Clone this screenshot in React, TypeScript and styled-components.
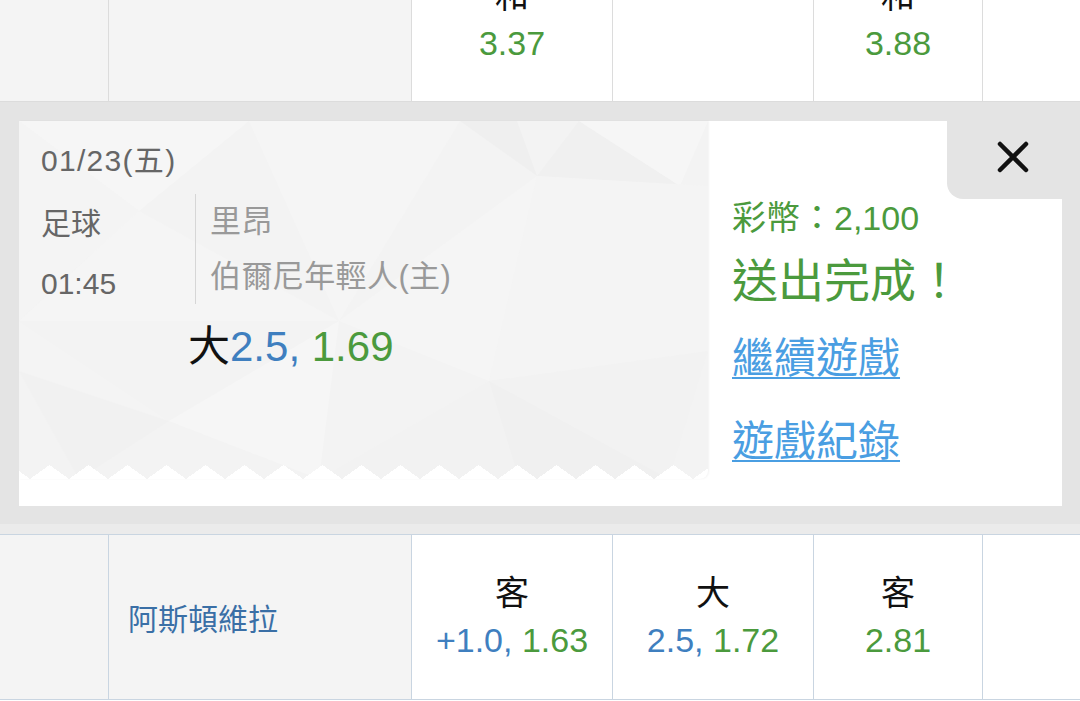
import React from 'react';
import styled, { createGlobalStyle } from 'styled-components';

const GlobalStyle = createGlobalStyle`
  body {
    margin: 0;
    background: #fff;
    font-family: "Liberation Sans", "Noto Sans CJK TC", sans-serif;
  }
`;

const colors = {
    green: '#4b9a3d',
    blue: '#3f7fbf',
    link: '#4a9ee2',
    team: '#3a6fa6',
    panel: '#e4e4e4',
    shade: '#f4f4f4',
};

const Page = styled.div`
    width: 1080px;
    height: 701px;
    overflow: hidden;
    background: #fff;
`;

const Row = styled.div<{ $tone: 'grey' | 'blue'; $top?: boolean }>`
    display: grid;
    grid-template-columns: 108px 303px 201px 201px 169px 1fr;
    height: ${p => (p.$top ? '164px' : '166px')};
    box-sizing: border-box;
    margin-top: ${p => (p.$top ? '-62px' : '0')};
    border-top: ${p => (p.$top ? 'none' : '1px solid #c9d5e1')};
    border-bottom: 1px solid ${p => (p.$tone === 'grey' ? '#dcdcdc' : '#c9d5e1')};
    --line: ${p => (p.$tone === 'grey' ? '#dcdcdc' : '#c9d5e1')};
`;

const Cell = styled.div<{ $shade?: boolean; $left?: boolean }>`
    display: flex;
    flex-direction: column;
    justify-content: center;
    align-items: ${p => (p.$left ? 'flex-start' : 'center')};
    padding-left: ${p => (p.$left ? '19px' : '0')};
    background: ${p => (p.$shade ? colors.shade : '#fff')};
    & + & {
        border-left: 1px solid var(--line);
    }
`;

const Pick = styled.div`
    font-size: 34px;
    line-height: 47px;
    color: #111;
`;

const Odds = styled.div`
    font-size: 34px;
    line-height: 47px;
    white-space: nowrap;
`;

const Line = styled.span`
    color: ${colors.blue};
`;

const Price = styled.span`
    color: ${colors.green};
`;

const TeamName = styled.div`
    font-size: 30px;
    color: ${colors.team};
`;

const Panel = styled.section`
    background: ${colors.panel};
    padding: 19px 18px 18px 19px;
    border-bottom: 10px solid #ebebeb;
`;

const Card = styled.div`
    display: flex;
    height: 385px;
    background: #fff;
`;

const Ticket = styled.div`
    position: relative;
    width: 689px;
    height: 358px;
    box-sizing: border-box;
    padding: 20px 0 0 22px;
    background: #f3f3f3;
    border-bottom-right-radius: 8px;
    box-shadow: 1px 0 2px rgba(0, 0, 0, 0.05);
    overflow: hidden;

    &::after {
        content: '';
        position: absolute;
        left: 0;
        right: 0;
        bottom: 0;
        height: 14px;
        background-image: conic-gradient(from 125.7deg at 50% 0, #fff 108.6deg, transparent 0);
        background-size: 39px 14px;
        background-position: 11px 0;
        background-repeat: repeat-x;
    }
`;

const TicketArt = styled.svg`
    position: absolute;
    inset: 0;
`;

const TicketBody = styled.div`
    position: relative;
`;

const DateLine = styled.div`
    font-size: 30px;
    line-height: 40px;
    letter-spacing: 1.3px;
    color: #666;
`;

const MatchRow = styled.div`
    display: flex;
    margin-top: 13px;
`;

const MetaCol = styled.div`
    width: 154px;
    font-size: 30px;
    line-height: 60px;
    color: #666;
`;

const Teams = styled.div`
    height: 110px;
    padding-left: 14px;
    border-left: 1px solid #d6d6d6;
    font-size: 31px;
    line-height: 55px;
    letter-spacing: 0.4px;
    color: #999;
`;

const Bet = styled.div`
    margin: 8px 0 0 147px;
    font-size: 42px;
    line-height: 50px;
    color: #111;
`;

const Info = styled.div`
    position: relative;
    flex: 1;
    padding: 75px 0 0 24px;
`;

const CloseTab = styled.button`
    position: absolute;
    top: 0;
    right: 0;
    width: 115px;
    height: 78px;
    box-sizing: border-box;
    border: none;
    padding: 20px 33px 0 0;
    background: ${colors.panel};
    border-bottom-left-radius: 16px;
    display: flex;
    align-items: flex-start;
    justify-content: flex-end;
    cursor: pointer;
`;

const Coins = styled.div`
    font-size: 34px;
    line-height: 44px;
    color: ${colors.green};
`;

const Done = styled.div`
    margin-top: 11px;
    font-size: 46px;
    line-height: 60px;
    color: ${colors.green};
`;

const ActionLink = styled.a<{ $gap: number }>`
    display: block;
    width: max-content;
    margin-top: ${p => p.$gap}px;
    font-size: 42px;
    line-height: 56px;
    color: ${colors.link};
    text-decoration: underline;
    text-decoration-thickness: 2px;
    text-underline-offset: 4px;
`;

const shards: [string, string][] = [
    ['0,0 230,0 120,90', '#f6f6f6'],
    ['0,0 120,90 0,200', '#f4f4f4'],
    ['230,0 441,0 320,200', '#f5f5f5'],
    ['441,0 518,55 498,0', '#efefef'],
    ['518,55 560,0 661,65', '#f0f0f0'],
    ['560,0 689,0 661,65', '#f6f6f6'],
    ['120,90 320,200 0,200', '#f5f5f5'],
    ['0,250 150,300 60,358', '#f1f1f1'],
    ['0,200 150,300 0,250', '#f4f4f4'],
    ['150,300 320,200 300,358', '#f6f6f6'],
    ['320,200 518,55 470,260', '#f5f5f5'],
    ['518,55 689,65 689,230 470,260', '#f4f4f4'],
    ['470,260 689,230 650,358', '#f2f2f2'],
    ['300,358 470,260 500,358', '#f2f2f2'],
    ['500,358 470,260 650,358', '#f0f0f0'],
];

const CloseIcon = () => (
    <svg width="32" height="32" viewBox="0 0 32 32">
        <path d="M3 3 L29 29 M29 3 L3 29" stroke="#111" strokeWidth="4.5" strokeLinecap="round" />
    </svg>
);

export default function App() {
    return (
        <>
            <GlobalStyle />
            <Page>
                <Row $tone="grey" $top>
                    <Cell $shade />
                    <Cell $shade />
                    <Cell>
                        <Pick>和</Pick>
                        <Odds><Price>3.37</Price></Odds>
                    </Cell>
                    <Cell />
                    <Cell>
                        <Pick>和</Pick>
                        <Odds><Price>3.88</Price></Odds>
                    </Cell>
                    <Cell />
                </Row>

                <Panel>
                    <Card>
                        <Ticket>
                            <TicketArt width="689" height="358" viewBox="0 0 689 358">
                                {shards.map(([pts, fill], i) => (
                                    <polygon key={i} points={pts} fill={fill} />
                                ))}
                            </TicketArt>
                            <TicketBody>
                                <DateLine>01/23(五)</DateLine>
                                <MatchRow>
                                    <MetaCol>
                                        <div>足球</div>
                                        <div>01:45</div>
                                    </MetaCol>
                                    <Teams>
                                        <div>里昂</div>
                                        <div>伯爾尼年輕人(主)</div>
                                    </Teams>
                                </MatchRow>
                                <Bet>大<Line>2.5, </Line><Price>1.69</Price></Bet>
                            </TicketBody>
                        </Ticket>
                        <Info>
                            <CloseTab aria-label="關閉"><CloseIcon /></CloseTab>
                            <Coins>彩幣：2,100</Coins>
                            <Done>送出完成！</Done>
                            <ActionLink href="#" $gap={20}>繼續遊戲</ActionLink>
                            <ActionLink href="#" $gap={27}>遊戲紀錄</ActionLink>
                        </Info>
                    </Card>
                </Panel>

                <Row $tone="blue">
                    <Cell $shade />
                    <Cell $shade $left>
                        <TeamName>阿斯頓維拉</TeamName>
                    </Cell>
                    <Cell>
                        <Pick>客</Pick>
                        <Odds><Line>+1.0, </Line><Price>1.63</Price></Odds>
                    </Cell>
                    <Cell>
                        <Pick>大</Pick>
                        <Odds><Line>2.5, </Line><Price>1.72</Price></Odds>
                    </Cell>
                    <Cell>
                        <Pick>客</Pick>
                        <Odds><Price>2.81</Price></Odds>
                    </Cell>
                    <Cell />
                </Row>
            </Page>
        </>
    );
}
